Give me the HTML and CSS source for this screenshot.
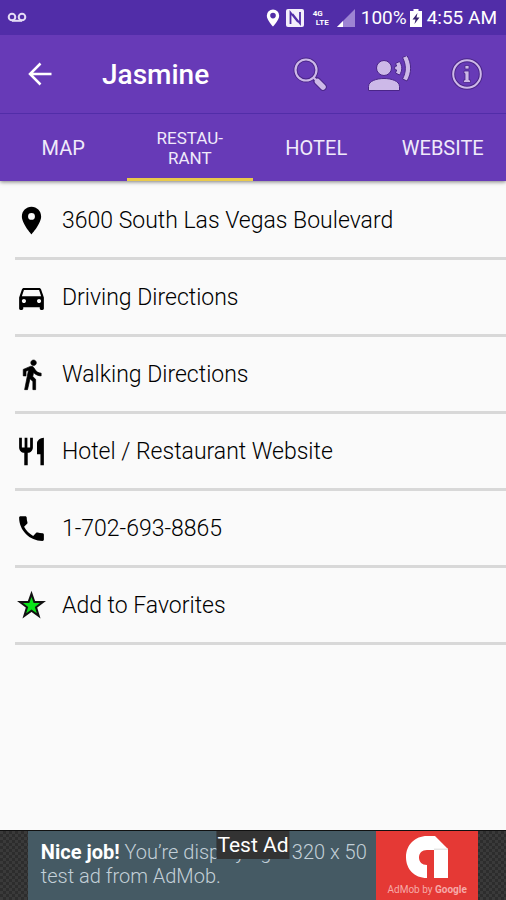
FILE: index.html
```html
<!DOCTYPE html>
<html lang="en">
<head>
  <meta charset="UTF-8">
  <meta name="viewport" content="width=device-width, initial-scale=1.0">
  <title>Jasmine</title>
  <link rel="stylesheet" href="styles.css">
</head>
<body>
  <header class="header">
    <div class="status">
      <svg class="voicemail" width="20" height="12" viewBox="0 0 20 12" fill="none" stroke="#e4dcf5" stroke-width="2">
        <circle cx="5" cy="5" r="3.3"/><circle cx="15" cy="5" r="3.3"/><path d="M5 8.8h10"/>
      </svg>
      <svg class="pin" width="14" height="18" viewBox="0 0 14 18">
        <path fill="#fff" fill-rule="evenodd" d="M7 .5A6.2 6.2 0 0 0 .8 6.700c0 4.400 6.200 10.800 6.200 10.800s6.200-6.400 6.200-10.800A6.200 6.200 0 0 0 7 .5zM7 3.800a2.800 2.800 0 1 1 0 5.600 2.800 2.800 0 0 1 0-5.600z"/>
      </svg>
      <svg class="nfc" width="18" height="18" viewBox="0 0 18 18">
        <rect width="18" height="18" rx="2" fill="#f3effb"/>
        <path d="M4.500 15V3.500L12 13M14 3v11.500L6.500 5" fill="none" stroke="#512da8" stroke-width="1.800"/>
      </svg>
      <span class="lte"><b>4G</b><b>LTE</b></span>
      <svg class="signal" width="18" height="18" viewBox="0 0 18 18">
        <path fill="#9d84d3" d="M18 0v18H0z"/><path fill="#fff" d="M6 12v6H0z"/>
      </svg>
      <span>100%</span>
      <svg class="battery" width="12" height="18" viewBox="0 0 12 18">
        <path fill="#fff" d="M3.500 0h5v2H12v16H0V2h3.500z"/><path fill="#37236e" d="M7.500 4L2.500 10.500h3L4.500 15l5-6.500h-3z"/>
      </svg>
      <span>4:55 AM</span>
    </div>
    <div class="toolbar">
      <button type="button" class="icon-button" aria-label="Back">
        <svg width="24" height="24" viewBox="0 0 24 24" fill="none" stroke="#fff" stroke-width="2.500"><path d="M23.500 12H3M12.500 1.500L2 12l10.500 10.500"/></svg>
      </button>
      <h1>Jasmine</h1>
      <div class="actions">
        <button type="button" class="icon-button" aria-label="Search">
          <svg width="36" height="36" viewBox="0 0 36 36" fill="none">
            <circle cx="14" cy="14" r="10.500" stroke="#4a2588" stroke-width="4"/>
            <path d="M22 22l3 3" stroke="#4a2588" stroke-width="4"/>
            <path d="M25 25l6 6" stroke="#4a2588" stroke-width="7.500" stroke-linecap="round"/>
            <circle cx="14" cy="14" r="10.500" stroke="#cdb9e8" stroke-width="2.200"/>
            <path d="M21.500 21.500l4 4" stroke="#cdb9e8" stroke-width="2.200"/>
            <path d="M25.500 25.500l5.500 5.500" stroke="#cdb9e8" stroke-width="5.500" stroke-linecap="round"/>
          </svg>
        </button>
        <button type="button" class="icon-button" aria-label="Speak">
          <svg width="44" height="36" viewBox="0 0 44 36" fill="#cdb9e8" stroke="#4a2588" stroke-width="1">
            <circle cx="17" cy="12" r="7.500"/>
            <path d="M1.500 34.500v-4c0-5.500 8-8 15.500-8s15.500 2.500 15.500 8v4z"/>
            <path d="M28.500 7.500l4-2c3 4 3 9.500 0 13.500l-4-2 1.200-3-2-.5v-3l2-.5z"/>
            <path d="M35.500 1.500l4.500-2c4.800 8 4.800 17.500 0 25.500l-4.500-2c3.800-7 3.800-14.500 0-21.500z"/>
          </svg>
        </button>
        <button type="button" class="icon-button" aria-label="Info">
          <svg width="34" height="34" viewBox="0 0 34 34" fill="none">
            <circle cx="17" cy="17" r="13.800" stroke="#4a2588" stroke-width="4"/>
            <circle cx="17" cy="17" r="13.800" stroke="#cdb9e8" stroke-width="2"/>
            <path fill="#cdb9e8" stroke="#4a2588" stroke-width=".8" d="M15 8.500h4v3.500h-4zM14 14h5v9h1.500v2.500h-7V23H15v-6.500h-1z"/>
          </svg>
        </button>
      </div>
    </div>
    <nav class="tabs">
      <button type="button">MAP</button>
      <button type="button" class="two-line active">RESTAU-<br>RANT</button>
      <button type="button">HOTEL</button>
      <button type="button">WEBSITE</button>
    </nav>
  </header>

  <main>
    <ul class="list">
      <li><a href="#address">
        <svg viewBox="0 0 24 24"><path d="M12 2C8.130 2 5 5.130 5 9c0 5.250 7 13 7 13s7-7.750 7-13c0-3.870-3.130-7-7-7zm0 9.500a2.500 2.500 0 1 1 0-5 2.500 2.500 0 0 1 0 5z"/></svg>
        3600 South Las Vegas Boulevard
      </a></li>
      <li><a href="#driving">
        <svg viewBox="0 0 24 24"><path d="M18.920 6.010C18.720 5.420 18.160 5 17.500 5h-11c-.66 0-1.210.42-1.420 1.010L3 12v8c0 .55.45 1 1 1h1c.55 0 1-.45 1-1v-1h12v1c0 .55.45 1 1 1h1c.55 0 1-.45 1-1v-8l-2.080-5.990zM6.500 16c-.83 0-1.500-.67-1.500-1.500S5.670 13 6.500 13s1.500.67 1.500 1.500S7.330 16 6.500 16zm11 0c-.83 0-1.500-.67-1.500-1.500s.67-1.500 1.500-1.500 1.500.67 1.500 1.500-.67 1.500-1.500 1.500zM5 11l1.500-4.500h11L19 11H5z"/></svg>
        Driving Directions
      </a></li>
      <li><a href="#walking">
        <svg viewBox="0 0 24 24"><path stroke="#000" stroke-width=".5" d="M13.500 5.500c1.100 0 2-.9 2-2s-.9-2-2-2-2 .9-2 2 .9 2 2 2zM9.800 8.900L7 23h2.100l1.800-8 2.100 2v6h2v-7.500l-2.100-2 .6-3C14.800 12 16.800 13 19 13v-2c-1.900 0-3.500-1-4.300-2.400l-1-1.600c-.4-.6-1-1-1.700-1-.3 0-.5.1-.8.1L6 8.300V13h2V9.600l1.800-.7"/></svg>
        Walking Directions
      </a></li>
      <li><a href="#site">
        <svg viewBox="0 0 24 24"><path d="M11 9H9V2H7v7H5V2H3v7c0 2.120 1.660 3.840 3.750 3.970V22h2.500v-9.030C11.340 12.840 13 11.120 13 9V2h-2v7zm5-3v8h2.500v8H21V2c-2.760 0-5 2.240-5 4z"/></svg>
        Hotel / Restaurant Website
      </a></li>
      <li><a href="tel:1-702-693-8865">
        <svg viewBox="0 0 24 24"><path d="M6.620 10.790c1.440 2.830 3.760 5.140 6.590 6.590l2.200-2.200c.27-.27.67-.36 1.020-.24 1.120.37 2.330.57 3.570.57.55 0 1 .45 1 1V20c0 .55-.45 1-1 1-9.390 0-17-7.610-17-17 0-.55.45-1 1-1h3.500c.55 0 1 .45 1 1 0 1.250.2 2.450.57 3.570.11.35.03.74-.25 1.020l-2.200 2.200z"/></svg>
        1-702-693-8865
      </a></li>
      <li><a href="#favorites">
        <svg viewBox="0 0 24 24"><path fill="#0be31a" stroke="#111" stroke-width="1.500" d="M12 3.500l2.100 6h6.200l-5 3.800 1.900 6.200-5.200-3.700-5.200 3.700 1.900-6.200-5-3.800h6.200z"/></svg>
        Add to Favorites
      </a></li>
    </ul>
  </main>

  <footer class="ad">
    <div class="banner">
      <p><strong>Nice job!</strong> You’re displaying a 320 x 50 test ad from AdMob.</p>
      <div class="admob">
        <svg width="44" height="44" viewBox="0 0 44 44">
          <path fill="#fff" d="M22 43C9 43 1 34 1 22S10 1 22 1h8l13 13v29H29V15h-7c-5 0-8 3-8 7.500s3 7.500 8 7.500z"/>
          <path fill="#e6e6e6" d="M29 13.500h14v1.500H29z"/>
        </svg>
        <span>AdMob by <b>Google</b></span>
      </div>
    </div>
    <span class="test-label">Test Ad</span>
  </footer>
</body>
</html>
```
FILE: styles.css
```css
* {
  box-sizing: border-box;
}
body {
  display: flex;
  flex-direction: column;
  min-height: 100vh;
  margin: 0;
  background: #fafafa;
  color: #000;
  font-family: Roboto, sans-serif;
}
button {
  padding: 0;
  border: none;
  background: none;
  color: inherit;
  font: inherit;
  cursor: pointer;
}
svg {
  display: block;
  flex: none;
}
.header {
  background: #673ab7;
  color: #fff;
  box-shadow: 0 1px 4px rgba(0, 0, 0, 0.5);
}

/* status bar */
.status {
  display: flex;
  align-items: center;
  height: 35px;
  padding: 0 9px 0 7px;
  background: #512da8;
  font-size: 19px;
}
.voicemail {
  margin-right: auto;
}
.nfc {
  margin: 0 9px 0 6px;
}
.lte {
  display: flex;
  flex-direction: column;
  width: 16px;
  margin-right: 8px;
  font-size: 8px;
  line-height: 9px;
}
.lte b + b {
  text-align: right;
}
.signal {
  margin-right: 6px;
}
.battery {
  margin: 0 5px 0 3px;
}

/* title bar */
.toolbar {
  display: flex;
  align-items: center;
  height: 78px;
  padding: 0 22px 0 28px;
}
.toolbar h1 {
  margin: 0 0 0 50px;
  font-size: 28px;
  font-weight: 500;
}
.actions {
  display: flex;
  align-items: center;
  gap: 39px;
  margin-left: auto;
}

/* tabs */
.tabs {
  display: grid;
  grid-template-columns: repeat(4, 1fr);
  height: 68px;
  border-top: 1px solid #512da8;
  font-size: 20px;
}
.tabs button {
  padding-top: 3px;
  border-bottom: 3px solid transparent;
  color: #f0eafa;
}
.tabs .two-line {
  font-size: 17px;
  line-height: 20px;
}
.tabs .active {
  border-color: #e9c94b;
}

/* details */
main {
  flex: 1;
}
.list {
  margin: 0;
  padding: 2px 0 0 15px;
  list-style: none;
}
.list li {
  border-bottom: 3px solid #d8d8d8;
}
.list a {
  display: flex;
  align-items: center;
  gap: 14px;
  min-height: 74px;
  color: inherit;
  font-size: 23px;
  font-weight: 300;
  text-decoration: none;
}
.list svg {
  width: 33px;
  height: 33px;
}

/* ad banner */
.ad {
  position: relative;
  display: flex;
  justify-content: center;
  border-top: 1px solid #111;
  background: #333 repeating-conic-gradient(#2d2d2d 0 25%, #3a3a3a 0 50%) 0 0 / 6px 6px;
}
.banner {
  display: flex;
  width: 89%;
  height: 69px;
  background: #455a64;
}
.banner p {
  flex: 1;
  margin: 0;
  padding: 9px 4px 0 13px;
  color: #c3d0d8;
  font-size: 20px;
  font-weight: 300;
  line-height: 24px;
}
.banner strong {
  color: #fff;
  font-weight: 700;
}
.admob {
  display: flex;
  flex-direction: column;
  align-items: center;
  width: 102px;
  padding-top: 4px;
  background: #e53935;
  color: #f6aaa8;
  font-size: 10px;
}
.admob span {
  margin-top: 5px;
}
.test-label {
  position: absolute;
  top: 0;
  left: 50%;
  transform: translateX(-50%);
  padding: 0 1px;
  background: #333;
  color: #fff;
  font-size: 21px;
  line-height: 28px;
  white-space: nowrap;
}
```
